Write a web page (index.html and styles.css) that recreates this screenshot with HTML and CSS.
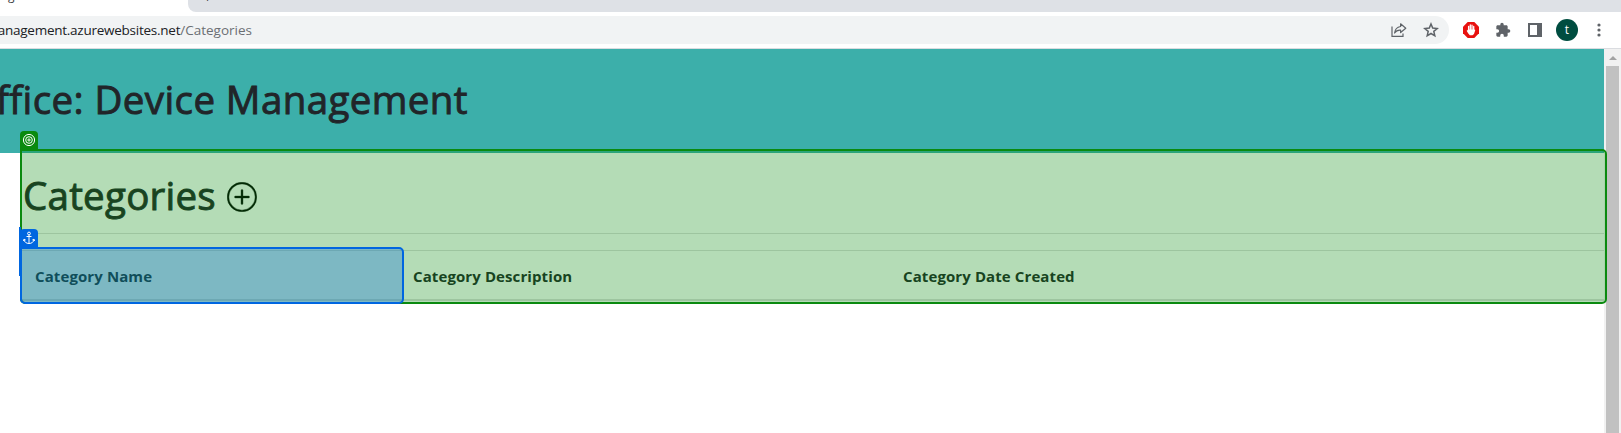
FILE: index.html
```html
<!DOCTYPE html>
<html lang="en">
<head>
<meta charset="utf-8">
<title>Categories</title>
<link rel="stylesheet" href="styles.css">
</head>
<body>
<div class="browser">
  <div class="tabstrip">
    <div class="tab-active"><span class="tab-text">g</span></div>
    <div class="tab-rest"><span class="tab-rest-text">p</span></div>
  </div>
  <div class="toolbar">
    <div class="omnibox">
      <div class="url"><span>anagement.azurewebsites.net<span class="url-path">/Categories</span></span></div>
      <div class="omni-icons">
        <svg width="16" height="16" viewBox="0 0 16 16" fill="none" stroke="#5f6368" stroke-width="1.2"><path d="M1 4.5V14.4H12V11.5"/><path d="M9.6 1.8L14.8 6.2L9.6 10.5V8.2C6.700 8 4.800 9 3.600 11C4 7.500 6 5 9.600 4.500Z" stroke-linejoin="round"/></svg>
        <svg width="16" height="16" viewBox="0 0 16 16" fill="none" stroke="#5f6368" stroke-width="1.5"><path d="M8 2L9.700 6.100L14.200 6.500L10.800 9.400L11.800 13.800L8 11.500L4.200 13.800L5.200 9.400L1.800 6.500L6.300 6.100Z"/></svg>
      </div>
    </div>
    <div class="extensions">
      <svg width="16" height="16" viewBox="0 0 16 16"><path d="M4.700 0H11.300L16 4.700V11.300L11.300 16H4.700L0 11.300V4.700Z" fill="#e8110f"/><path d="M5.600 9V4.300M7.300 8V3M9 8V3.200M10.700 9V4.500" stroke="#fff" stroke-width="1.300" stroke-linecap="round"/><path d="M5 7.500H11.300L12.300 8L11 12L9.500 13.300H6.800L5.300 11.500L3.600 8.800L4.500 8.300Z" fill="#fff"/></svg>
      <svg width="16" height="16" viewBox="0 0 24 24" fill="#5f6368"><path d="M20.500 11H19V7c0-1.100-.9-2-2-2h-4V3.500a2.500 2.500 0 0 0-5 0V5H4c-1.100 0-2 .9-2 2v3.800h1.500a2.700 2.700 0 0 1 0 5.400H2V20c0 1.100.9 2 2 2h3.800v-1.500a2.700 2.700 0 0 1 5.400 0V22H17c1.100 0 2-.9 2-2v-4h1.500a2.500 2.500 0 0 0 0-5z"/></svg>
      <svg class="panel-icon" width="14" height="14" viewBox="0 0 14 14"><path fill="#5f6368" fill-rule="evenodd" d="M0 0H14V14H0ZM2 2V12H9V2Z"/></svg>
      <span class="avatar">t</span>
      <svg class="menu-icon" width="4" height="14" viewBox="0 0 4 14" fill="#5f6368"><circle cx="2" cy="2" r="1.600"/><circle cx="2" cy="7" r="1.600"/><circle cx="2" cy="12" r="1.600"/></svg>
    </div>
  </div>
  <div class="viewport">
    <main class="page">
      <header class="banner"><h1 class="banner-title"><span>ffice: Device Management</span></h1></header>
      <section class="content">
        <div class="heading">
          <h1 class="title">Categories</h1>
          <svg width="30" height="30" viewBox="0 0 16 16" stroke="#000" stroke-width=".2"><path d="M8 15A7 7 0 1 1 8 1a7 7 0 0 1 0 14zm0 .9A7.900 7.900 0 1 0 8 .1a7.900 7.900 0 0 0 0 15.800z"/><path d="M8 4a.5.5 0 0 1 .5.5v3h3a.5.5 0 0 1 0 1h-3v3a.5.5 0 0 1-1 0v-3h-3a.5.5 0 0 1 0-1h3v-3A.5.5 0 0 1 8 4z"/></svg>
        </div>
        <div class="table-head">
          <div>Category Name</div>
          <div>Category Description</div>
          <div>Category Date Created</div>
        </div>
      </section>
    </main>
    <div class="scrollbar"><div class="scroll-up"></div><div class="thumb"></div></div>
  </div>
  <div class="target-box"></div>
  <div class="anchor-edge"></div>
  <div class="anchor-box"></div>
  <div class="tag tag-target"><svg width="14" height="14" viewBox="0 0 14 14" fill="none" stroke="#fff"><circle cx="7" cy="7" r="5.600"/><circle cx="7" cy="7" r="3.300"/><circle cx="7" cy="7" r="1.100"/></svg></div>
  <div class="tag tag-anchor"><svg width="14" height="14" viewBox="0 0 14 14" fill="none" stroke="#fff"><circle cx="7" cy="2.500" r="1.400"/><path d="M7 4V12.500M4.500 5.500H9.500M2 8.500C2.300 11 4.300 12.500 7 12.500S11.700 11 12 8.500M1.500 10L2 8.200L3.700 9M12.500 10L12 8.200L10.300 9"/></svg></div>
</div>
</body>
</html>
```

FILE: styles.css
```css
* { box-sizing: border-box; }
body { margin: 0; background: #fff; font-family: "Open Sans", "Noto Sans", sans-serif; overflow: hidden; }
svg { display: block; flex: none; }
.browser { position: relative; width: 1621px; height: 433px; display: flex; flex-direction: column; overflow: hidden; }
.tabstrip { height: 12px; display: flex; overflow: hidden; flex: none; }
.tab-active { width: 188px; background: #fff; padding-left: 8px; }
.tab-rest { flex: 1; background: #dee1e6; border-bottom-left-radius: 8px; padding-left: 18px; }
.tab-text, .tab-rest-text { display: block; font-size: 12px; line-height: 16px; margin-top: -12px; color: #3c4043; }
.tab-rest-text { margin-top: -14px; }
.toolbar { height: 37px; flex: none; display: flex; padding-top: 4px; border-bottom: 1px solid #dadce0; }
.omnibox { width: 1449px; height: 28px; border-radius: 0 14px 14px 0; background: #f1f3f4; display: flex; justify-content: space-between; align-items: center; padding-right: 10px; }
.url { width: 252px; display: flex; justify-content: flex-end; white-space: nowrap; font-size: 13.5px; color: #202124; letter-spacing: -0.25px; }
.url-path { color: #6b6f73; letter-spacing: 0; }
.omni-icons { display: flex; gap: 16px; }
.extensions { display: flex; align-items: center; height: 28px; padding-left: 14px; gap: 16px; }
.panel-icon { margin-left: 1px; }
.avatar { width: 22px; height: 22px; margin-left: -2px; border-radius: 50%; background: #004d40; color: #fff; font-size: 12px; line-height: 21px; text-align: center; }
.menu-icon { margin-left: 3px; }
.viewport { flex: 1; display: flex; }
.page { width: 1604px; }
.banner { height: 104px; background: #3cafaa; padding-top: 26px; }
.banner-title { margin: 0; width: 468px; display: flex; justify-content: flex-end; white-space: nowrap; font-size: 38.5px; line-height: 48px; font-weight: 500; letter-spacing: 0.4px; color: #212529; -webkit-text-stroke: 0.9px #212529; }
.content { padding-left: 21px; }
.heading { height: 81px; padding: 18px 0 0 2px; border-bottom: 1px solid #dedede; display: flex; align-items: flex-start; }
.heading svg { margin-top: 11px; }
.title { margin: 0; width: 204px; font-size: 38.5px; line-height: 48px; font-weight: 500; letter-spacing: 0.25px; color: #212529; -webkit-text-stroke: 0.9px #212529; }
.table-head { margin-top: 16px; height: 51px; display: grid; grid-template-columns: 378px 490px 1fr; align-items: center; border-top: 1px solid #dedede; border-bottom: 2px solid #dedede; font-size: 15px; font-weight: 700; letter-spacing: 0.1px; color: #212529; white-space: nowrap; }
.table-head > div { padding: 1px 0 0 14px; }
.scrollbar { width: 17px; background: #f1f1f1; display: flex; flex-direction: column; align-items: center; }
.scroll-up { height: 17px; display: flex; align-items: center; }
.scroll-up::before { content: ""; border: 4px solid transparent; border-top: 0; border-bottom-color: #a3a3a3; }
.thumb { width: 13px; flex: 1; background: #c1c1c1; }
.target-box { position: absolute; left: 20px; top: 149px; width: 1587px; height: 155px; border: 2px solid #0a8a0f; border-radius: 0 5px 5px 5px; background: rgba(8, 140, 13, 0.3); }
.anchor-box { position: absolute; left: 20px; top: 247px; width: 384px; height: 57px; border: 2px solid #0066e0; border-radius: 0 5px 5px 5px; background: rgba(0, 102, 224, 0.3); }
.anchor-edge { position: absolute; left: 19px; top: 227px; width: 2px; height: 49px; background: #0066e0; }
.tag { position: absolute; left: 20px; width: 18px; height: 18px; padding: 2px; border-radius: 4px 4px 0 0; }
.tag-target { top: 131px; background: #0a8a0f; }
.tag-anchor { top: 229px; background: #0066e0; }
```
